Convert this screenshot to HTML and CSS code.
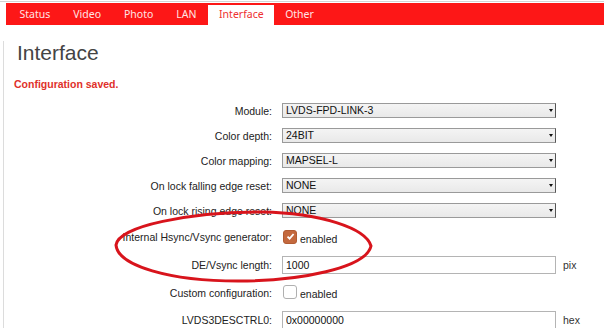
FILE: index.html
```html
<!DOCTYPE html>
<html>
<head>
<title>Interface</title>
<link rel="stylesheet" href="styles.css">
</head>
<body>
<div class="page">
<div class="tabs">
<a class="tab">Status</a>
<a class="tab">Video</a>
<a class="tab">Photo</a>
<a class="tab">LAN</a>
<a class="tab active">Interface</a>
<a class="tab">Other</a>
</div>
<div class="content">
<h1>Interface</h1>
<p class="msg">Configuration saved.</p>
<div class="form">
<label class="lbl">Module:</label>
<span class="sel"><select><option>LVDS-FPD-LINK-3</option></select></span>
<span></span>

<label class="lbl">Color depth:</label>
<span class="sel"><select><option>24BIT</option></select></span>
<span></span>

<label class="lbl">Color mapping:</label>
<span class="sel"><select><option>MAPSEL-L</option></select></span>
<span></span>

<label class="lbl">On lock falling edge reset:</label>
<span class="sel"><select><option>NONE</option></select></span>
<span></span>

<label class="lbl">On lock rising edge reset:</label>
<span class="sel"><select><option>NONE</option></select></span>
<span></span>

<label class="lbl">Internal Hsync/Vsync generator:</label>
<span class="chk"><span class="box on"><svg width="9" height="9" viewBox="0 0 9 9"><path d="M1.5 4.6 L3.6 6.7 L7.6 2" fill="none" stroke="#fff" stroke-width="1.8"/></svg></span>enabled</span>
<span></span>

<label class="lbl">DE/Vsync length:</label>
<input class="txt" type="text" value="1000">
<span class="unit">pix</span>

<label class="lbl">Custom configuration:</label>
<span class="chk"><span class="box"></span>enabled</span>
<span></span>

<label class="lbl">LVDS3DESCTRL0:</label>
<input class="txt" type="text" value="0x00000000">
<span class="unit">hex</span>
</div>
</div>
<svg class="mark" width="604" height="328" viewBox="0 0 604 328">
<path d="M116 245 C118 226 190 212 262 212 C320 213 366 228 371 246 C366 268 300 281 238 281 C170 281 118 266 116 245 Z" fill="none" stroke="#d8141c" stroke-width="3"/>
</svg>
</div>
</body>
</html>
```

FILE: styles.css
```css
body{
margin:0;
font-family:"Liberation Sans",Arial,sans-serif;
font-size:10.5px;
color:#222;
background:#fff;}
.page{
position:relative;
border-top:1px solid #d4d4d4;
margin-top:1px;
height:327px;
overflow:hidden;}
.tabs{
margin:1px 0 0 6px;
padding-left:2px;
height:22px;
background:#fd1717;
display:flex;
font-family:"Noto Sans",sans-serif;
font-size:10.5px;}
.tab{
padding:0 11.5px;
line-height:22px;
color:#ffe4e4;}
.tab.active{
background:#fff;
color:#ee3030;
margin-top:2px;
line-height:18px;
padding:0 10px 0 11px;}
.content{
margin:2px 0 0 3px;
border-left:1px solid #dcdcdc;
height:320px;}
h1{
font-size:21px;
line-height:24px;
font-weight:normal;
color:#444;
margin:16px 0 0 13px;}
.msg{
font-weight:bold;
color:#e0302a;
line-height:12px;
margin:13px 0 0 10px;}
.form{
margin-top:8px;
display:grid;
grid-template-columns:278px 274px auto;
grid-template-rows:repeat(5,25px) 28px 28px 27px 27px;
align-items:center;}
.lbl{
text-align:right;
padding-right:10px;
color:#222;}
.sel{
position:relative;
display:block;
height:15px;}
.sel select{
appearance:none;
-webkit-appearance:none;
display:block;
width:274px;
height:15px;
margin:0;
padding:0 0 0 3px;
border:1px solid #9a9a9a;
border-right:1px solid #555;
border-radius:0;
background:linear-gradient(#f4f4f4,#e9e9e9);
font-family:"Liberation Sans",Arial,sans-serif;
font-size:10.5px;
line-height:13px;
color:#111;}
.sel::after{
content:"";
position:absolute;
right:3px;
top:6px;
border-left:2px solid transparent;
border-right:2px solid transparent;
border-top:3px solid #111;}
.chk{
display:flex;
align-items:center;
padding-top:3px;
color:#222;}
.box{
width:12px;
height:12px;
margin:0 3px 0 1px;
border:1px solid #b0b0b0;
border-radius:3px;
background:#fff;
position:relative;
top:-2px;
display:flex;
align-items:center;
justify-content:center;}
.box.on{
background:#c4693e;
border-color:#b25c33;}
.txt{
display:block;
box-sizing:border-box;
width:274px;
height:18px;
margin:0;
padding:0 3px;
border:1px solid #b4b4b4;
font-family:"Liberation Sans",Arial,sans-serif;
font-size:10.5px;
color:#111;}
.unit{
padding-left:7px;
color:#333;}
.mark{
position:absolute;
left:0;
top:-2px;
pointer-events:none;}
```
